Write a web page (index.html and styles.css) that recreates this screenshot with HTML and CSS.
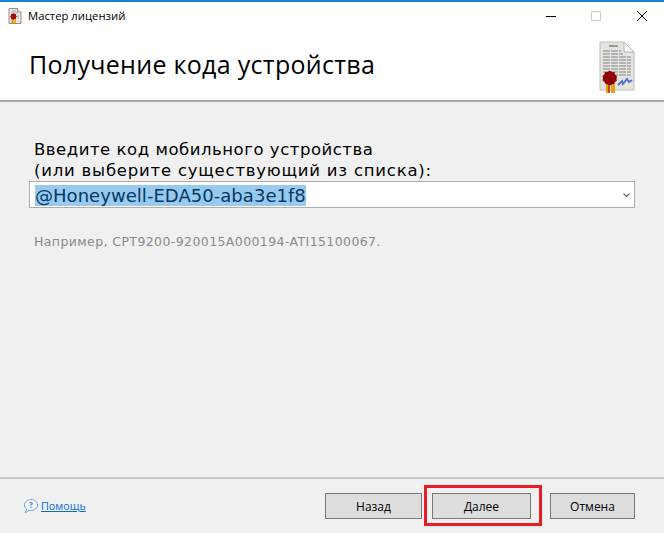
FILE: index.html
```html
<!DOCTYPE html>
<html lang="ru">
<head>
<meta charset="utf-8">
<title>Мастер лицензий</title>
<link rel="stylesheet" href="styles.css">
</head>
<body>
<div class="window">
  <div class="top">
    <div class="titlebar">
      <svg class="appicon" viewBox="0 0 14 16" width="14" height="16">
        <path d="M1 .5H9.5L13 4V15.5H1Z" fill="#e9e7e2" stroke="#8f8f8f"/>
        <path d="M9.5 .5V4H13" fill="#fff" stroke="#8f8f8f"/>
        <path d="M3 3H8M3 5H10M9 8H11M9 10H11" stroke="#aaa"/>
        <rect x="3.5" y="11" width="2" height="4" fill="#f08a00"/>
        <rect x="6" y="11" width="2" height="4" fill="#f5b000"/>
        <path d="M5.5 5L6.5 6L8 6L8 7.5L9 8.5L8 9.5L8 11L6.5 11L5.5 12L4.5 11L3 11L3 9.5L2 8.5L3 7.5L3 6L4.5 6Z" fill="#9c1010"/>
      </svg>
      <span class="apptitle">Мастер лицензий</span>
      <div class="winctl">
        <svg class="ctl" viewBox="0 0 46 12" width="46" height="12"><path d="M20 6.5H30" stroke="#000"/></svg>
        <svg class="ctl" viewBox="0 0 46 12" width="46" height="12"><rect x="19.5" y="1.5" width="9" height="9" fill="none" stroke="#ccc"/></svg>
        <svg class="ctl" viewBox="0 0 46 12" width="46" height="12"><path d="M19 1L29 11M29 1L19 11" stroke="#000"/></svg>
      </div>
    </div>
    <div class="banner">
      <h1 class="heading">Получение кода устройства</h1>
      <svg class="bigicon" viewBox="0 0 36 52" width="36" height="52">
        <path d="M1 1H25L35 11V49H1Z" fill="#e6e4df" stroke="#bdbdbd"/>
        <path d="M25 1V11H35Z" fill="#fbfbfb" stroke="#b5b5b5"/>
        <path d="M10 5H19" stroke="#777" stroke-width="1.4"/>
        <path d="M4 10H22M4 13H24M4 16H32M4 19H32M4 22H32M4 25H32M4 28H32M4 31H32M4 34H32" stroke="#a3a3a3" stroke-width="1.4" stroke-dasharray="7 1"/>
        <path d="M19 44L23 40L24 43L28 38L30 41L33 39" fill="none" stroke="#4f74d6" stroke-width="2"/>
        <rect x="7" y="42" width="4" height="10" fill="#f0a000"/>
        <rect x="12" y="42" width="4" height="10" fill="#eaa010"/>
        <rect x="9" y="42" width="2" height="10" fill="#c9491a"/>
        <path d="M11 29.5L13 31L15.5 31L16 33.5L18 35.5L17.5 38L18 39.5L16 41L15 43L12.5 43.5L11 44.5L9 43.5L6.5 43L5.5 41L3.5 39.5L4 37L3.5 35L5.5 33.5L6 31L8.5 31Z" fill="#8f0505"/>
      </svg>
    </div>
  </div>
  <main class="content">
    <label class="prompt"><span class="line-a">Введите код мобильного устройства</span><br><span class="line-b">(или выберите существующий из списка):</span></label>
    <div class="combo">
      <span class="selected">@Honeywell-EDA50-aba3e1f8</span>
      <svg class="chev" viewBox="0 0 7 5" width="7" height="5"><path d="M.5 .5L3.5 3.5L6.5 .5" fill="none" stroke="#666" stroke-width="1.2"/></svg>
    </div>
    <p class="hint">Например, CPT9200-920015A000194-ATI15100067.</p>
  </main>
  <footer class="footer">
    <a class="help" href="#">
      <svg viewBox="0 0 16 16" width="16" height="16"><path d="M8 1.5C4.4 1.5 1.5 3.8 1.5 7C1.5 8.7 2.3 10 3.5 11C3.4 12.5 2.8 13.6 2 14.5C3.8 14.2 5 13.5 6 12.4C9.5 13 14.5 11.5 14.5 7C14.5 3.8 11.6 1.5 8 1.5Z" fill="#f4f8fc" stroke="#6ea6dc"/><text x="8" y="10.2" class="qm">?</text></svg>
      <span class="helptext">Помощь</span>
    </a>
    <div class="buttons">
      <button class="btn back">Назад</button>
      <button class="btn next">Далее</button>
      <button class="btn cancel">Отмена</button>
    </div>
    <div class="redbox"></div>
  </footer>
</div>
</body>
</html>
```
FILE: styles.css
```css
* { box-sizing: border-box; }
html, body { margin: 0; padding: 0; }
body { width: 664px; height: 533px; overflow: hidden; background: #f0f0f0; font-family: "DejaVu Sans", sans-serif; }
.window { display: flex; flex-direction: column; height: 533px; }
.top { background: #fff; border-top: 2px solid #1883d7; border-bottom: 2px solid #a9a9a9; height: 102px; }
.titlebar { display: flex; align-items: center; height: 27px; padding-left: 8px; }
.appicon { flex: none; }
.apptitle { margin-left: 6px; font: 11.3px "Open Sans", sans-serif; color: #000; }
.winctl { margin-left: auto; display: flex; }
.ctl { display: block; }
.banner { display: flex; justify-content: space-between; padding: 0 29px; }
.heading { margin: 0; padding-top: 16px; font: 400 25px/38px "Open Sans", sans-serif; color: #000; letter-spacing: .3px; }
.bigicon { flex: none; margin-top: 12px; }
.content { flex: 1; padding: 37px 29px 0; }
.prompt { display: block; margin-left: 5px; font-size: 16.5px; line-height: 21px; color: #000; }
.line-a { letter-spacing: .53px; }
.line-b { letter-spacing: .78px; }
.combo { display: flex; align-items: center; justify-content: space-between; width: 606px; height: 27px; padding: 1px 4px 0 5px; background: #fff; border: 1px solid #adadad; }
.selected { background: #99c9ef; font-size: 18px; line-height: 21px; color: #003a66; letter-spacing: .04px; }
.hint { margin: 26px 0 0 5px; font-size: 12.5px; color: #8a8a8a; line-height: 16px; letter-spacing: .4px; }
.footer { position: relative; display: flex; align-items: center; justify-content: space-between; height: 56px; border-top: 2px solid #c9c9c9; padding: 0 29px 0 23px; }
.help { display: flex; align-items: center; gap: 2px; text-decoration: none; margin-top: -1px; }
.helptext { font: 10.8px "Open Sans", sans-serif; color: #0a6cd6; text-decoration: underline; }
.qm { font: bold 8px "Open Sans", sans-serif; fill: #4a7fb5; text-anchor: middle; }
.buttons { display: flex; }
.btn { height: 26px; background: #dddddd; border: 1px solid #7a7a7a; font: 12px "Open Sans", sans-serif; color: #000; padding: 0; }
.back { width: 97px; }
.next { width: 99px; margin-left: 10px; }
.cancel { width: 85px; margin-left: 19px; }
.redbox { position: absolute; left: 424px; top: 6px; width: 118px; height: 41px; border: 3px solid #ed1c24; }
```
